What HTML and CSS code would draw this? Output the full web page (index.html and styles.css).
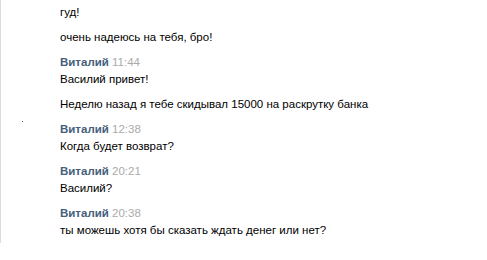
FILE: index.html
```html
<!DOCTYPE html>
<html lang="ru">
<head>
    <meta charset="UTF-8">
    <title>Диалог</title>
    <link rel="stylesheet" href="styles.css">
</head>
<body>

    <div class="dialog">
        <span class="dot"></span>

        <div class="msg">
            <div class="text">гуд!</div>
        </div>
        <div class="msg">
            <div class="text">очень надеюсь на тебя, бро!</div>
        </div>

        <div class="msg">
            <div class="author"><b>Виталий</b> <span class="time">11:44</span></div>
            <div class="text">Василий привет!</div>
        </div>
        <div class="msg">
            <div class="text">Неделю назад я тебе скидывал 15000 на раскрутку банка</div>
        </div>

        <div class="msg">
            <div class="author"><b>Виталий</b> <span class="time">12:38</span></div>
            <div class="text">Когда будет возврат?</div>
        </div>

        <div class="msg">
            <div class="author"><b>Виталий</b> <span class="time">20:21</span></div>
            <div class="text">Василий?</div>
        </div>

        <div class="msg">
            <div class="author"><b>Виталий</b> <span class="time">20:38</span></div>
            <div class="text">ты можешь хотя бы сказать ждать денег или нет?</div>
        </div>
    </div>

</body>
</html>
```

FILE: styles.css
```css
* {
    margin: 0;
    padding: 0;
    box-sizing: border-box;
}

body {
    background: #fff;
    font-family: Tahoma, "Liberation Sans", Arial, sans-serif;
    font-size: 11.5px;
    color: #000;
}

.dialog {
    position: relative;
    height: 243px;
    border-left: 1px solid #dcdcdc;
    padding: 0 0 0 59px;
}

.dot {
    position: absolute;
    left: 21px;
    top: 121px;
    width: 1px;
    height: 1px;
    background: #555;
}

.msg {
    padding-top: 4px;
    padding-bottom: 4px;
    line-height: 17px;
}

.author b {
    color: #45607c;
    font-weight: bold;
}

.time {
    color: #aaa;
}
```
